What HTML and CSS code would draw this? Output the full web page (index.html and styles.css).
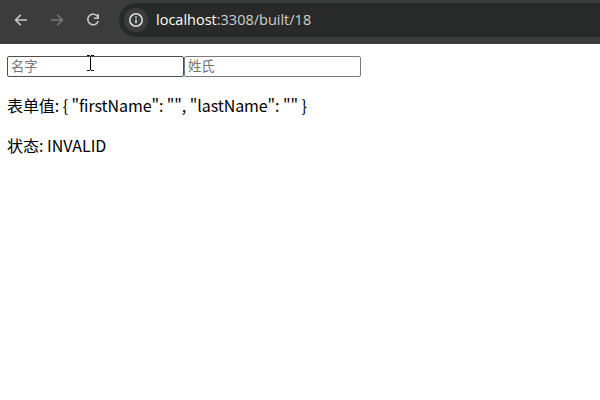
FILE: index.html
```html
<!DOCTYPE html>
<html lang="zh-CN">
<head>
<meta charset="utf-8">
<title>localhost:3308/built/18</title>
<link rel="stylesheet" href="styles.css">
</head>
<body>
<header class="toolbar">
  <svg class="nav" viewBox="0 0 16 16"><path d="M14 8H3M7.7 2.9L2.6 8l5.1 5.1"/></svg>
  <svg class="nav nav-disabled" viewBox="0 0 16 16"><path d="M2 8h11M8.3 2.9L13.4 8l-5.1 5.1"/></svg>
  <svg class="nav" viewBox="0 0 16 16"><path d="M12.6 4.6A5.3 5.3 0 1 0 13.2 9M13.2 2v4.3H8.9"/></svg>
  <div class="address">
    <span class="info"><svg viewBox="0 0 16 16"><circle cx="8" cy="8" r="6.2"/><path d="M8 7.3v4M8 4.5v1.6"/></svg></span>
    <span class="url"><span class="host">localhost</span>:3308/built/18</span>
  </div>
</header>
<main class="page">
  <form class="fields">
    <input class="field field-hover" type="text" placeholder="名字">
    <input class="field" type="text" placeholder="姓氏">
    <svg class="cursor" viewBox="0 0 7 16"><path d="M0 .5h3M4 .5h3M3.5 1v14M0 15.5h3M4 15.5h3"/></svg>
  </form>
  <p class="line value">表单值: { "firstName": "", "lastName": "" }</p>
  <p class="line">状态: INVALID</p>
</main>
</body>
</html>
```
FILE: styles.css
```css
* { box-sizing: border-box; }
body {
  margin: 0;
  height: 400px;
  overflow: hidden;
  background: #fff;
  color: #000;
  font: 16px/24px "Noto Sans CJK SC", sans-serif;
}
.toolbar {
  display: flex;
  align-items: center;
  height: 44px;
  padding: 0 0 4px 13px;
  background: #3c3c3c;
  border-bottom: 1px solid #464242;
}
.nav {
  width: 16px;
  height: 16px;
  margin-right: 20px;
  fill: none;
  stroke: #c7c7c7;
  stroke-width: 1.6;
}
.nav-disabled { stroke: #777; }
.address {
  display: flex;
  align-items: center;
  flex: 1;
  height: 34px;
  margin-left: -2px;
  padding-left: 5px;
  border-radius: 17px 0 0 17px;
  background: #282a29;
}
.info {
  display: flex;
  align-items: center;
  justify-content: center;
  width: 24px;
  height: 24px;
  border-radius: 50%;
  background: #3c3c3c;
}
.info svg {
  width: 16px;
  height: 16px;
  fill: none;
  stroke: #dfe3e3;
  stroke-width: 1.5;
}
.url {
  margin-left: 8px;
  color: #cfcfcf;
  font: 14.5px/20px "Open Sans", sans-serif;
}
.host { color: #fff; }
.page { padding: 12px 7px; }
.fields {
  position: relative;
  display: flex;
  height: 21px;
}
.field {
  width: 177px;
  height: 21px;
  padding: 0 3px 2px;
  border: 1px solid #767b7d;
  border-radius: 2px;
  outline: 0;
  background: #fff;
  font: 13.33px/17px "Noto Sans CJK SC", sans-serif;
}
.field::placeholder { color: #757575; }
.field-hover { border-color: #4f4f4f; }
.cursor {
  position: absolute;
  left: 80px;
  top: -1px;
  width: 7px;
  height: 16px;
  fill: none;
  stroke: #000;
  stroke-width: 1;
}
.line { margin: 16px 0 0; }
.value { letter-spacing: -0.08px; }
```
